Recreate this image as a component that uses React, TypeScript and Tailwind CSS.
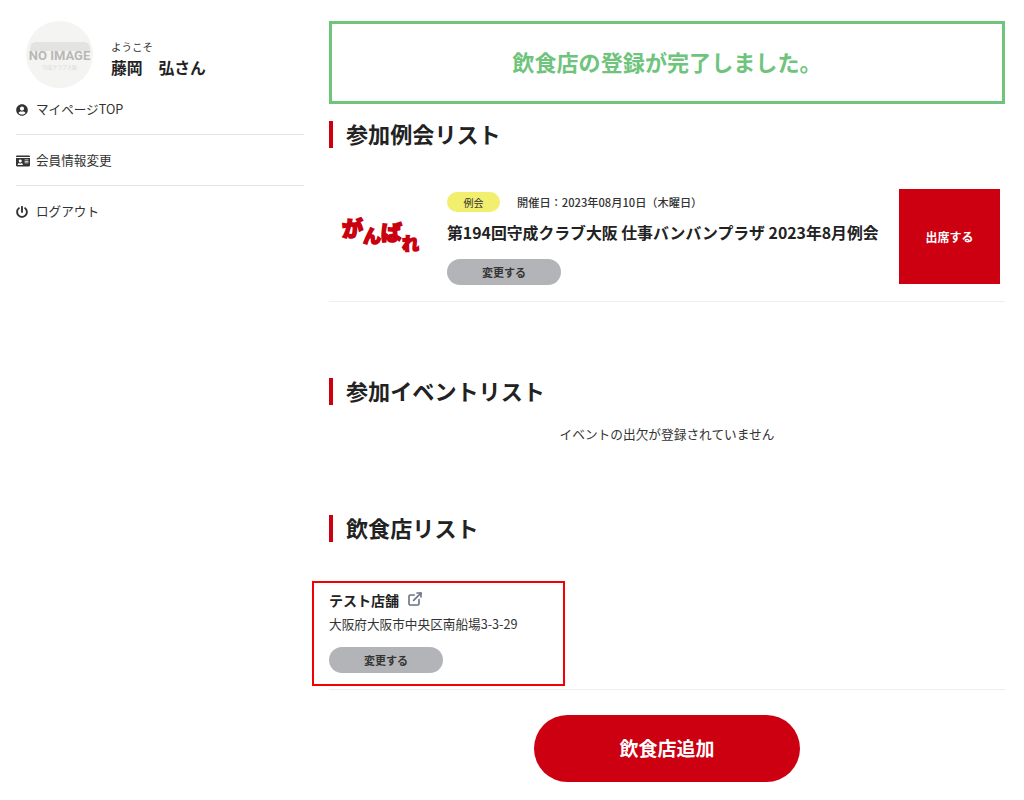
import { ExternalLink } from "lucide-react";
import { FaUserCircle, FaIdCard, FaPowerOff } from "react-icons/fa";

function Heading({ children }: { children: React.ReactNode }) {
  return (
    <h2 className="h-[27px] border-l-4 border-[#cc0011] pl-[13px] text-[22.1px] leading-[25px] font-bold text-[#222]">
      {children}
    </h2>
  );
}

function ChangeButton() {
  return (
    <div className="flex h-[26px] w-[114px] items-center justify-center rounded-full bg-[#b3b4b8] text-[11px] font-bold text-[#333]">
      変更する
    </div>
  );
}

function NavItem({ icon, label, last }: { icon: React.ReactNode; label: string; last?: boolean }) {
  return (
    <div className={`flex h-[51px] items-center border-b pt-[1px] text-[12.6px] text-[#333] ${last ? "border-transparent" : "border-[#e2e2e2]"}`}>
      <span className="flex w-[20px] text-[#333]">{icon}</span>
      {label}
    </div>
  );
}

export default function App() {
  return (
    <div className="flex h-[800px] w-[1024px] overflow-hidden bg-white font-['Noto_Sans_CJK_JP','Noto_Sans',sans-serif] text-[#333]">
      <aside className="ml-4 w-[288px] shrink-0 pt-[21px]">
        <div className="flex items-center pl-[10px]">
          <div className="relative flex h-[67px] w-[67px] shrink-0 flex-col items-center justify-center rounded-full bg-[#f4f4f2] pt-[9px]">
            <div className="absolute top-[21px] h-[9px] w-[60px] rounded-t-[6px] bg-[#e3e3e1]" />
            <span className="relative font-['Roboto',sans-serif] text-[13px] leading-[15px] font-bold whitespace-nowrap text-[#b8b8b8]">NO IMAGE</span>
            <span className="relative text-[5px] leading-[7px] text-[#d8d8d8]">守成クラブ大阪</span>
          </div>
          <div className="ml-[18px] pt-[10px]">
            <p className="text-[10.5px] leading-[14px] text-[#333]">ようこそ</p>
            <p className="mt-[2px] text-[15.8px] leading-[24px] font-bold whitespace-pre text-[#222]">藤岡　弘さん</p>
          </div>
        </div>
        <nav className="-mt-[4px]">
          <NavItem icon={<FaUserCircle size={12} />} label="マイページTOP" />
          <NavItem icon={<FaIdCard size={14} />} label="会員情報変更" />
          <NavItem icon={<FaPowerOff size={12} />} label="ログアウト" last />
        </nav>
      </aside>

      <main className="ml-[25px] w-[676px] shrink-0 pt-[21px]">
        <div className="flex h-[83px] items-center justify-center border-[3px] border-[#6fc47c] pb-[1px] text-[22.1px] font-bold text-[#6fc47c]">
          飲食店の登録が完了しました。
        </div>

        <div className="mt-[17px]">
          <Heading>参加例会リスト</Heading>
        </div>

        <div className="mt-[41px] flex h-[113px] items-start border-b border-[#eeeeee]">
          <div className="flex h-[95px] w-[118px] shrink-0 items-center pl-[13px]">
            <span className="flex h-[40px] items-start leading-none font-black whitespace-nowrap text-[#c9000f] [-webkit-text-stroke:1.5px_#c9000f]">
              <span className="inline-block text-[21px]">が</span>
              <span className="mt-[9px] inline-block text-[18px]">ん</span>
              <span className="mt-[4px] inline-block text-[21px]">ば</span>
              <span className="mt-[17px] inline-block text-[17px]">れ</span>
            </span>
          </div>
          <div className="flex-1 pt-[3px]">
            <div className="flex items-center">
              <span className="flex h-[20px] w-[53px] items-center justify-center rounded-full bg-[#f2ee6e] text-[10px] text-[#333]">例会</span>
              <span className="ml-[17px] text-[11.2px] font-medium text-[#333]">開催日：2023年08月10日（木曜日）</span>
            </div>
            <p className="mt-[9px] text-[15.85px] leading-[24px] font-bold whitespace-nowrap text-[#222]">第194回守成クラブ大阪 仕事バンバンプラザ 2023年8月例会</p>
            <div className="mt-[14px]">
              <ChangeButton />
            </div>
          </div>
          <div className="mr-[5px] flex h-[95px] w-[101px] shrink-0 items-center justify-center bg-[#cc0011] text-[12px] font-bold text-white">
            出席する
          </div>
        </div>

        <div className="mt-[76px]">
          <Heading>参加イベントリスト</Heading>
        </div>
        <p className="mt-[19px] text-center text-[12.7px] leading-[20px] text-[#333]">イベントの出欠が登録されていません</p>

        <div className="mt-[71px]">
          <Heading>飲食店リスト</Heading>
        </div>

        <div className="mt-[39px] h-[109px] border-b border-[#eeeeee]">
          <div className="-ml-[17px] h-[105px] w-[253px] border-2 border-[#f50000] pt-[6px] pl-[15px]">
            <div className="flex items-center text-[14px] leading-[22px] font-bold text-[#222]">
              テスト店舗
              <ExternalLink size={16} strokeWidth={2.4} className="ml-[8px] -translate-y-[1px] text-[#6b7280]" />
            </div>
            <p className="mt-[3px] text-[12.65px] leading-[20px] text-[#333]">大阪府大阪市中央区南船場3-3-29</p>
            <div className="mt-[13px]">
              <ChangeButton />
            </div>
          </div>
        </div>

        <div className="mt-[25px] flex justify-center">
          <div className="flex h-[67px] w-[266px] items-center justify-center rounded-full bg-[#cc0011] text-[19px] font-bold text-white">
            飲食店追加
          </div>
        </div>
      </main>
    </div>
  );
}
